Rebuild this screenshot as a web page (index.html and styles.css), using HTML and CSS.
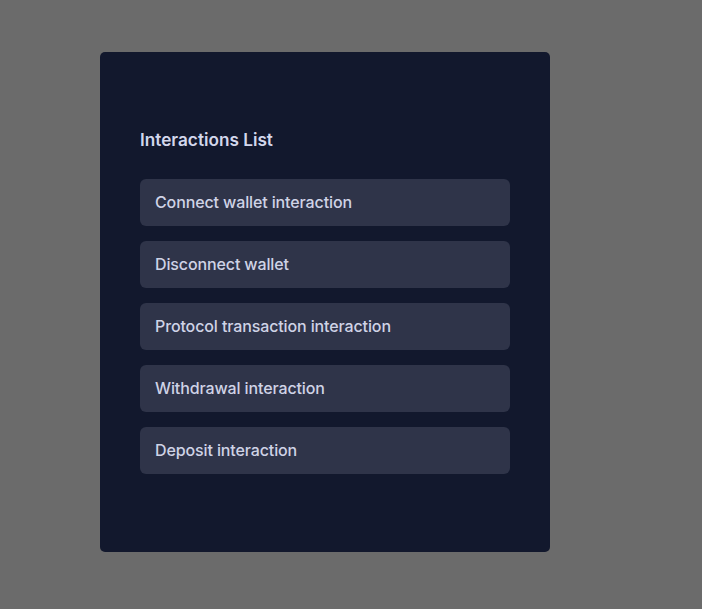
FILE: index.html
```html
<!DOCTYPE html>
<html>
<head>
<meta charset="utf-8">
<link rel="stylesheet" href="styles.css">
</head>
<body>
<div class="card">
  <h2 class="title">Interactions List</h2>
  <ul class="list">
    <li class="item">Connect wallet interaction</li>
    <li class="item">Disconnect wallet</li>
    <li class="item">Protocol transaction interaction</li>
    <li class="item">Withdrawal interaction</li>
    <li class="item">Deposit interaction</li>
  </ul>
</div>
</body>
</html>
```
FILE: styles.css
```css
html, body {
  margin: 0;
  padding: 0;
  background: #6b6b6b;
}
body {
  padding: 52px 0 0 100px;
  font-family: Inter, "Noto Sans", sans-serif;
}
.card {
  box-sizing: border-box;
  width: 450px;
  height: 500px;
  background: #12182d;
  border-radius: 5px;
  padding: 76px 40px 40px;
}
.title {
  margin: 0 0 27px;
  font-size: 17.2px;
  line-height: 24px;
  font-weight: 600;
  color: #d3d7ec;
}
.list {
  list-style: none;
  margin: 0;
  padding: 0;
  display: flex;
  flex-direction: column;
  gap: 15px;
}
.item {
  height: 47px;
  box-sizing: border-box;
  display: flex;
  align-items: center;
  padding: 0 15px 2px;
  background: #2f3449;
  border-radius: 6px;
  color: #cfd3e6;
  font-size: 16px;
  font-weight: 500;
  letter-spacing: -0.12px;
}
```
